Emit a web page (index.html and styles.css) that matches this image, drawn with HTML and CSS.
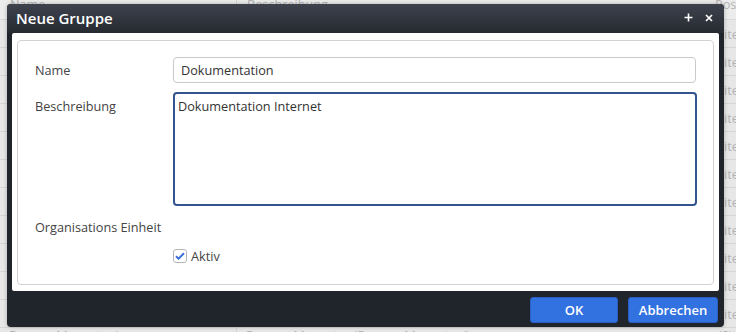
FILE: index.html
```html
<!DOCTYPE html>
<html lang="de">
<head>
<meta charset="utf-8">
<title>Neue Gruppe</title>
<link rel="stylesheet" href="styles.css">
</head>
<body>
<div class="page">
  <div class="grid-head">
    <div class="cell c1">Name</div>
    <div class="cell c2">Beschreibung</div>
    <div class="cell c3">Poss</div>
  </div>
  <div class="grid-body">
    <div class="row"><div class="cell c1"></div><div class="cell c2"></div><div class="cell c3">Site</div></div>
    <div class="row"><div class="cell c1"></div><div class="cell c2"></div><div class="cell c3">Site</div></div>
    <div class="row"><div class="cell c1"></div><div class="cell c2"></div><div class="cell c3">Site</div></div>
    <div class="row"><div class="cell c1"></div><div class="cell c2"></div><div class="cell c3">Site</div></div>
    <div class="row"><div class="cell c1"></div><div class="cell c2"></div><div class="cell c3">Site</div></div>
    <div class="row"><div class="cell c1"></div><div class="cell c2"></div><div class="cell c3">Site</div></div>
    <div class="row"><div class="cell c1"></div><div class="cell c2"></div><div class="cell c3">Site</div></div>
    <div class="row"><div class="cell c1"></div><div class="cell c2"></div><div class="cell c3">Site</div></div>
    <div class="row"><div class="cell c1"></div><div class="cell c2"></div><div class="cell c3">Site</div></div>
    <div class="row"><div class="cell c1"></div><div class="cell c2"></div><div class="cell c3">Site</div></div>
    <div class="row"><div class="cell c1"></div><div class="cell c2"></div><div class="cell c3">Site</div></div>
    <div class="row row-last"><div class="cell c1">Ronnor Muenster/</div><div class="cell c2">Ronnor Muenster (Ronnor Muenster/)</div><div class="cell c3">/Site</div></div>
  </div>
</div>

<div class="dialog">
  <div class="dlg-head">
    <span class="dlg-title">Neue Gruppe</span>
    <span class="dlg-tools">
      <svg class="tool" width="9" height="9" viewBox="0 0 9 9"><path d="M4.5 0.5v8M0.5 4.5h8" stroke="#fff" stroke-width="1.6"/></svg>
      <svg class="tool" width="8" height="8" viewBox="0 0 8 8"><path d="M1 1l6 6M7 1L1 7" stroke="#fff" stroke-width="1.7"/></svg>
    </span>
  </div>
  <div class="dlg-body">
    <div class="panel">
      <div class="frow">
        <label class="lbl lbl-mid">Name</label>
        <div class="inp">Dokumentation</div>
      </div>
      <div class="frow">
        <label class="lbl lbl-top">Beschreibung</label>
        <div class="area">Dokumentation Internet</div>
      </div>
      <div class="frow">
        <label class="lbl">Organisations Einheit</label>
        <div></div>
      </div>
      <div class="frow check-row">
        <div></div>
        <div class="check">
          <span class="box"><svg width="10" height="8" viewBox="0 0 10 8"><path d="M1 4.2l2.6 2.5L9 1.2" fill="none" stroke="#3d6fdc" stroke-width="2"/></svg></span>
          <span class="check-lbl">Aktiv</span>
        </div>
      </div>
    </div>
  </div>
  <div class="dlg-foot">
    <button class="btn btn-ok">OK</button>
    <button class="btn btn-cancel">Abbrechen</button>
  </div>
</div>
</body>
</html>
```

FILE: styles.css
```css
* { box-sizing: border-box; }
html, body {
  margin: 0;
  padding: 0;
  width: 736px;
  height: 332px;
  overflow: hidden;
  background: #e7e7e7;
  font-family: "Open Sans", "Noto Sans", sans-serif;
  font-size: 12.7px;
}

.page {
  margin-top: -9px;
  height: 341px;
  overflow: hidden;
  color: #b4b4b4;
}
.grid-head, .row {
  display: grid;
  grid-template-columns: 237px 476px 1fr;
}
.grid-head { height: 29px; border-bottom: 1px solid #d9d9d9; background: #ececec; }
.grid-head .cell { padding: 0 10px; line-height: 26px; white-space: nowrap; overflow: hidden; }
.row { height: 28px; border-bottom: 1px solid #d6d6d6; }
.row .cell { line-height: 28px; padding-left: 9px; white-space: nowrap; overflow: hidden; }
.c1 { border-right: 1px solid #d6d6d6; }
.row .c3 { padding-left: 4px; }
.grid-head .c3 { padding-left: 2px; }
.row-last { border-bottom: 0; height: 12px; }
.row-last .cell { line-height: 14px; }

.dialog {
  position: absolute;
  left: 7px;
  top: 4px;
  width: 717px;
  border-radius: 4px;
  overflow: hidden;
  background: #20242b;
  box-shadow: 0 0 4px rgba(0,0,0,0.25);
}
.dlg-head {
  height: 29px;
  background: linear-gradient(#3d424d, #262a31);
  display: flex;
  align-items: center;
  justify-content: space-between;
  padding: 0 11px 0 9px;
}
.dlg-title {
  color: #fff;
  font-weight: 600;
  font-size: 15px;
  line-height: 20px;
  margin-top: -2px;
}
.dlg-tools { display: flex; align-items: center; gap: 12px; margin-top: -2px; }
.tool { display: block; }

.dlg-body {
  background: #fff;
  margin: 0 5px;
  padding: 7px 5px 6px;
  border-radius: 2px;
}
.panel {
  border: 1px solid #d2d2d2;
  border-radius: 4px;
  padding: 16px 17px 20px 17px;
  display: flex;
  flex-direction: column;
  gap: 9px;
}
.frow {
  display: grid;
  grid-template-columns: 138px 1fr;
}
.lbl {
  color: #444;
  line-height: 20px;
}
.lbl-mid { align-self: center; }
.lbl-top { padding-top: 4px; }
.inp {
  height: 26px;
  border: 1px solid #c9c9c9;
  border-radius: 4px;
  padding: 0 7px;
  line-height: 24px;
  color: #333;
}
.area {
  height: 114px;
  border: 2px solid #32558f;
  border-radius: 4px;
  padding: 2px 3px;
  line-height: 20px;
  color: #333;
  margin-right: -1px;
}
.frow:nth-child(3) { margin-top: 2px; }
.check-row { margin-top: 2px; }
.check { display: flex; align-items: center; gap: 4px; height: 16px; }
.box {
  width: 14px;
  height: 14px;
  border: 1px solid #b5b5b5;
  border-radius: 3px;
  display: flex;
  align-items: center;
  justify-content: center;
  background: #fff;
}
.check-lbl { color: #444; line-height: 20px; }

.dlg-foot {
  height: 36px;
  display: flex;
  justify-content: flex-end;
  align-items: center;
  gap: 10px;
  padding: 1px 6px 0 0;
}
.btn {
  height: 26px;
  border: 1px solid #2a5ec4;
  border-radius: 3px;
  background: #3271e0;
  color: #fff;
  font-family: "Open Sans", "Noto Sans", sans-serif;
  font-size: 13px;
  font-weight: 600;
  padding: 0;
}
.btn-ok { width: 88px; }
.btn-cancel { width: 90px; }
```
